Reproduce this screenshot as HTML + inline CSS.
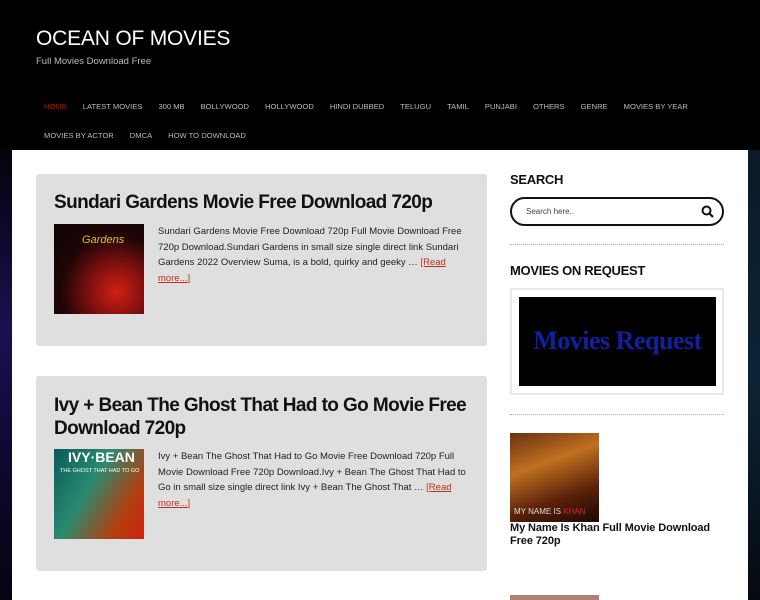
<!DOCTYPE html>
<html><head><meta charset="utf-8"><style>
*{margin:0;padding:0;box-sizing:border-box}
body{width:760px;height:600px;overflow:hidden;background:#000;font-family:"Liberation Sans",sans-serif;position:relative}
.bgl{position:absolute;left:0;top:150px;width:12px;height:450px;background:linear-gradient(180deg,#04030c 0%,#1a1050 40%,#120a3a 60%,#05040f 100%)}
.bgr{position:absolute;right:0;top:150px;width:12px;height:450px;background:linear-gradient(180deg,#0a1a28,#0c2436 50%,#050a10)}
.t{position:absolute;left:36px;top:27px;color:#fff;font-size:21px;letter-spacing:-0.2px}
.st{position:absolute;left:36px;top:56px;color:#bbb;font-size:9.5px}
.nav{position:absolute;left:44px;font-size:7.6px;color:#bbb;white-space:nowrap}
.nav span{margin-right:16px}
.main{position:absolute;left:12px;top:150px;width:736px;height:450px;background:#fff}
.card{position:absolute;left:36px;width:451px;background:#dfdfdf;border-radius:3px}
.card h2{position:absolute;left:18px;width:420px;font-size:19px;font-weight:bold;color:#111;line-height:23px;letter-spacing:-0.6px}
.img{position:absolute;left:18px;width:90px;height:90px}
.p{position:absolute;left:122px;width:312px;font-size:9.5px;line-height:15.5px;color:#222}
.p a{color:#c0301a;text-decoration:underline}
.sb{position:absolute;left:510px;font-size:13px;font-weight:bold;color:#111;letter-spacing:-0.3px}
.dot{position:absolute;left:510px;width:214px;border-top:1px dotted #aab;}
</style></head><body>
<div class="t">OCEAN OF MOVIES</div>
<div class="st">Full Movies Download Free</div>
<div class="nav" style="top:102px"><span style="color:#c00">HOME</span><span>LATEST MOVIES</span><span>300 MB</span><span>BOLLYWOOD</span><span>HOLLYWOOD</span><span>HINDI DUBBED</span><span>TELUGU</span><span>TAMIL</span><span>PUNJABI</span><span>OTHERS</span><span>GENRE</span><span>MOVIES BY YEAR</span></div>
<div class="nav" style="top:131px"><span>MOVIES BY ACTOR</span><span>DMCA</span><span>HOW TO DOWNLOAD</span></div>
<div class="bgl"></div><div class="bgr"></div>
<div class="main"></div>
<div class="card" style="top:174px;height:172px">
<h2 style="top:17px">Sundari Gardens Movie Free Download 720p</h2>
<div class="img" style="top:50px;background:radial-gradient(circle at 70% 75%,#d02010 0,#801010 30%,#200505 60%,#0a0505 100%)"><div style="position:absolute;left:28px;top:10px;color:#e0c020;font-size:11px;font-style:italic">Gardens</div></div>
<div class="p" style="top:50px">Sundari Gardens Movie Free Download 720p Full Movie Download Free 720p Download.Sundari Gardens in small size single direct link Sundari Gardens 2022 Overview Suma, is a bold, quirky and geeky … <a>[Read more...]</a></div>
</div>
<div class="card" style="top:376px;height:195px">
<h2 style="top:18px">Ivy + Bean The Ghost That Had to Go Movie Free Download 720p</h2>
<div class="img" style="top:73px;background:linear-gradient(120deg,#0a5a5a,#2a8a70 40%,#b04010 75%,#d02010)"><div style="position:absolute;left:14px;top:0;color:#fff;font-size:14px;font-weight:bold">IVY·BEAN</div><div style="position:absolute;left:6px;top:19px;color:#fff;font-size:5.5px;white-space:nowrap">THE GHOST THAT HAD TO GO</div></div>
<div class="p" style="top:73px">Ivy + Bean The Ghost That Had to Go Movie Free Download 720p Full Movie Download Free 720p Download.Ivy + Bean The Ghost That Had to Go in small size single direct link Ivy + Bean The Ghost That … <a>[Read more...]</a></div>
</div>
<div class="sb" style="top:172px">SEARCH</div>
<div style="position:absolute;left:510px;top:197px;width:214px;height:29px;border:2px solid #111;border-radius:15px"><span style="position:absolute;left:14px;top:8px;font-size:8px;color:#444">Search here..</span>
<svg style="position:absolute;right:8px;top:6px" width="13" height="13" viewBox="0 0 13 13"><circle cx="5.5" cy="5.5" r="4" stroke="#111" stroke-width="2" fill="none"/><path d="M8.5 8.5L12 12" stroke="#111" stroke-width="2.2"/></svg></div>
<div class="dot" style="top:244px"></div>
<div class="sb" style="top:263px">MOVIES ON REQUEST</div>
<div style="position:absolute;left:510px;top:288px;width:214px;height:107px;border:2px solid #e8e8ec;border-radius:2px"></div>
<div style="position:absolute;left:519px;top:297px;width:197px;height:89px;background:#000;color:#1020a0;font-family:'Liberation Serif',serif;font-weight:bold;font-size:26px;text-align:center;line-height:88px;letter-spacing:-0.5px">Movies Request</div>
<div class="dot" style="top:414px"></div>
<div style="position:absolute;left:510px;top:433px;width:89px;height:89px;background:linear-gradient(160deg,#6a3010,#c07020 35%,#5a2008 70%,#1a0805)"><div style="position:absolute;left:4px;bottom:6px;font-size:8px;color:#ddd">MY NAME IS <span style="color:#e02020">KHAN</span></div></div>
<div style="position:absolute;left:510px;top:522px;width:222px;font-size:11px;font-weight:bold;line-height:13px;color:#111;letter-spacing:-0.1px">My Name Is Khan Full Movie Download Free 720p</div>
<div style="position:absolute;left:510px;top:595px;width:89px;height:5px;background:#b08070"></div>
</body></html>
